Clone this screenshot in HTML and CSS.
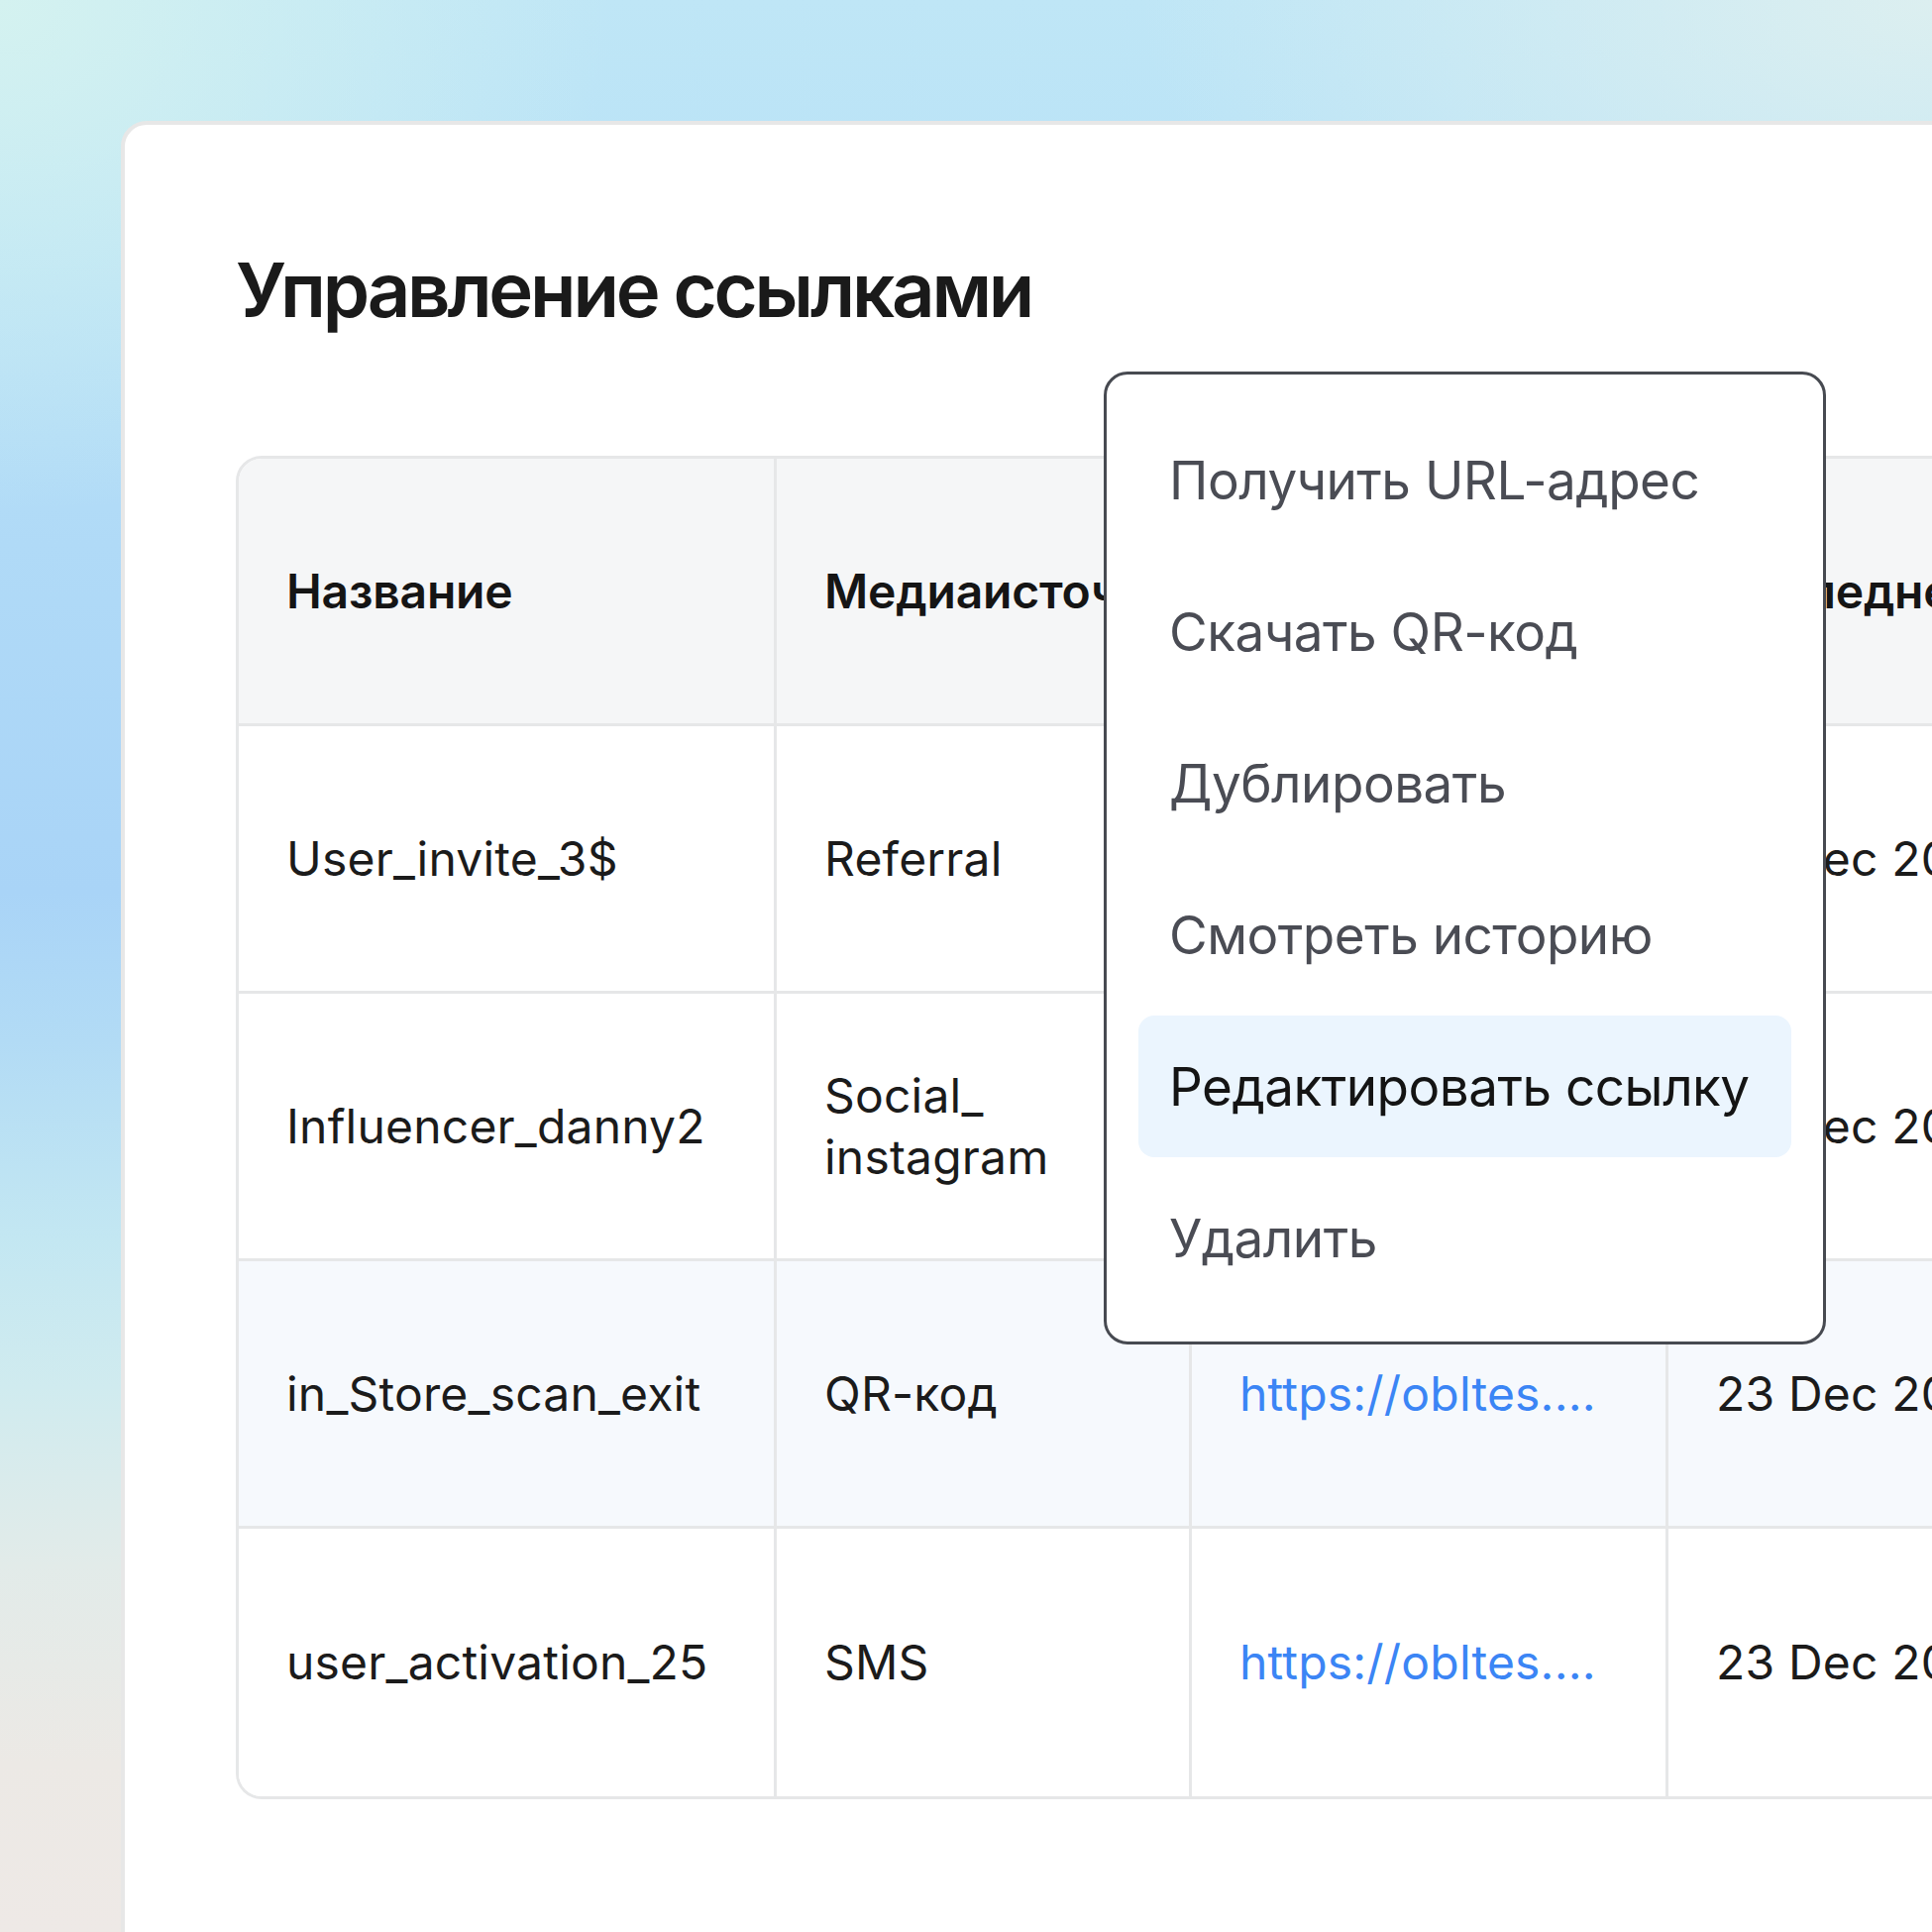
FILE: index.html
```html
<!DOCTYPE html>
<html lang="ru">
<head>
<meta charset="utf-8">
<title>Управление ссылками</title>
<link rel="stylesheet" href="styles.css">
</head>
<body>
<div class="card">
  <h1 class="title">Управление ссылками</h1>
  <div class="table">
    <div class="cell head">Название</div>
    <div class="cell head">Медиаисточник</div>
    <div class="cell head">Ссылка</div>
    <div class="cell head">Последнее изменение</div>

    <div class="cell">User_invite_3$</div>
    <div class="cell">Referral</div>
    <div class="cell link">https://obltes....</div>
    <div class="cell">23 Dec 2024</div>

    <div class="cell">Influencer_danny2</div>
    <div class="cell wrap">Social_<br>instagram</div>
    <div class="cell link">https://obltes....</div>
    <div class="cell">23 Dec 2024</div>

    <div class="cell tint">in_Store_scan_exit</div>
    <div class="cell tint">QR-код</div>
    <div class="cell tint link">https://obltes....</div>
    <div class="cell tint">23 Dec 2024</div>

    <div class="cell last">user_activation_25</div>
    <div class="cell last">SMS</div>
    <div class="cell last link">https://obltes....</div>
    <div class="cell last">23 Dec 2024</div>
  </div>

  <div class="menu">
    <div class="menu-item">Получить URL-адрес</div>
    <div class="menu-item">Скачать QR-код</div>
    <div class="menu-item">Дублировать</div>
    <div class="menu-item">Смотреть историю</div>
    <div class="menu-item active">Редактировать ссылку</div>
    <div class="menu-item">Удалить</div>
  </div>
</div>
</body>
</html>
```
FILE: styles.css
```css
html, body {
  margin: 0;
  padding: 0;
  width: 1950px;
  height: 1950px;
  overflow: hidden;
}

body {
  font-family: "Inter", "Noto Sans", "Liberation Sans", sans-serif;
  background:
    radial-gradient(ellipse 620px 520px at 0 0, rgba(212,242,240,1) 0%, rgba(212,242,240,0.6) 40%, rgba(212,242,240,0) 100%),
    radial-gradient(ellipse 800px 420px at 100% 0, rgba(220,239,240,1) 0%, rgba(220,239,240,0.5) 50%, rgba(220,239,240,0) 100%),
    linear-gradient(to bottom, #bfe6f6 0px, #b8e2f7 250px, #b0daf7 550px, #a9d4f7 900px, #b2dbf5 1050px, #c3e7f2 1250px, #d0ebef 1400px, #e2ebe9 1580px, #ece9e5 1780px, #eee9e6 1950px);
}

.card {
  position: relative;
  box-sizing: border-box;
  margin: 122px 0 0 122px;
  width: 2100px;
  height: 2100px;
  background: #ffffff;
  border: 4px solid #e7e7e7;
  border-radius: 26px;
  padding: 119px 0 0 112px;
}

.title {
  margin: 0;
  font-size: 76px;
  line-height: 94px;
  font-weight: 600;
  color: #1a1a1a;
  letter-spacing: -3.2px;
}

.table {
  margin-top: 121px;
  width: 2200px;
  border: 3px solid #e6e7e8;
  border-radius: 26px;
  overflow: hidden;
  display: grid;
  grid-template-columns: 540px 419px 481px 760px;
}

.cell {
  box-sizing: border-box;
  height: 270px;
  display: flex;
  align-items: center;
  padding: 0 20px 0 48px;
  border-bottom: 3px solid #e6e7e8;
  border-left: 3px solid #e6e7e8;
  font-size: 48px;
  line-height: 62px;
  color: #1b1b1b;
  white-space: nowrap;
  background: #ffffff;
  letter-spacing: 0.2px;
}

.cell:nth-child(4n+1) {
  border-left: none;
}

.cell.head {
  background: #f5f6f7;
  font-weight: 600;
  color: #151515;
  letter-spacing: -0.2px;
}

.cell.tint {
  background: #f6f9fd;
}

.cell.last {
  border-bottom: none;
}

.cell.link {
  color: #3b85f5;
}

.menu {
  position: absolute;
  left: 988px;
  top: 249px;
  box-sizing: border-box;
  width: 729px;
  background: #ffffff;
  border: 3px solid #474a51;
  border-radius: 24px;
  padding: 35px 32px 33px;
  display: flex;
  flex-direction: column;
  gap: 10px;
}

.menu-item {
  height: 143px;
  display: flex;
  align-items: center;
  padding-left: 31px;
  border-radius: 16px;
  font-size: 53px;
  letter-spacing: -0.5px;
  color: #4a4c54;
  white-space: nowrap;
}

.menu-item.active {
  background: #ebf5fe;
  color: #141414;
}
```
